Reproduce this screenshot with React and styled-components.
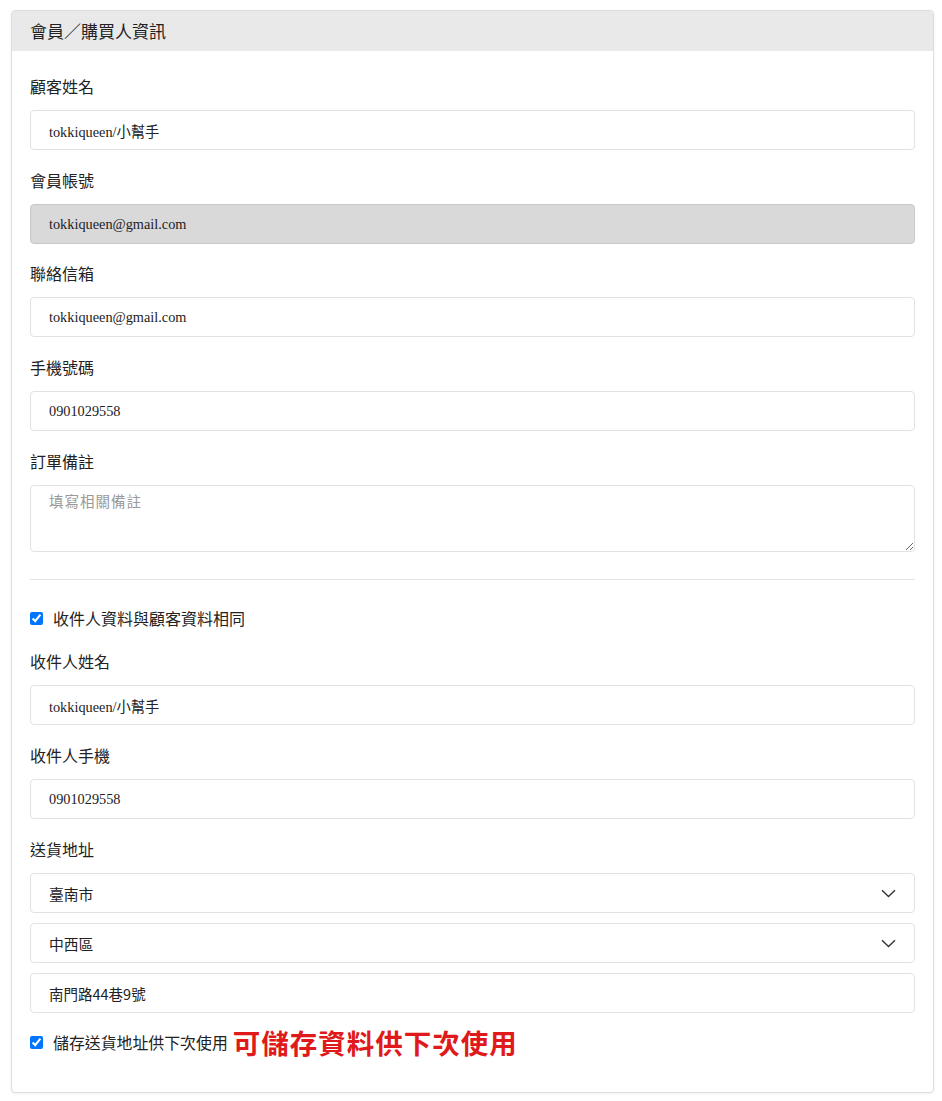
import React from "react";
import styled, { createGlobalStyle } from "styled-components";

const Global = createGlobalStyle`
  html, body { margin: 0; padding: 0; background: #fff; }
  body { font-family: "Noto Sans CJK TC", "Noto Sans", sans-serif; color: #222; }
  * { box-sizing: border-box; }
`;

const Page = styled.div`
  padding: 10px 8px 9px 11px;
`;

const Card = styled.section`
  border: 1px solid #dcdcdc;
  border-radius: 4px;
  background: #fff;
  box-shadow: 0 1px 3px rgba(0,0,0,0.06);
  overflow: hidden;
`;

const Header = styled.div`
  height: 40px;
  background: #e9e9e9;
  display: flex;
  align-items: center;
  padding: 0 18px 1px;
  font-size: 17px;
  color: #222;
`;

const Body = styled.div`
  padding: 24px 18px 38px;
  display: flex;
  flex-direction: column;
`;

const Field = styled.div`
  display: flex;
  flex-direction: column;
  margin-bottom: ${p => p.$mb ?? 19}px;
`;

const Label = styled.label`
  font-size: 16px;
  line-height: 22px;
  margin-bottom: 13px;
  color: #222;
`;

const Input = styled.input`
  height: 40px;
  width: 100%;
  border: 1px solid #e2e2e2;
  border-radius: 4px;
  padding: 0 18px;
  font-family: ${p => (p.$sans ? `"Noto Sans CJK TC", sans-serif` : `"Liberation Serif", "Noto Sans CJK TC", serif`)};
  font-size: ${p => (p.$sans ? "14.5px" : "14.3px")};
  color: #222;
  background: ${p => (p.disabled ? "#d9d9d9" : "#fff")};
  border-color: ${p => (p.disabled ? "#c8c8c8" : "#e2e2e2")};
  outline: none;
  &:disabled { color: #222; }
`;

const TextArea = styled.textarea`
  height: 67px;
  width: 100%;
  border: 1px solid #e2e2e2;
  border-radius: 4px;
  padding: 4px 18px;
  font-family: "Noto Sans CJK TC", sans-serif;
  font-size: 14.5px;
  outline: none;
  &::placeholder { color: #9a9a9a; letter-spacing: 1px; }
`;

const Divider = styled.hr`
  border: none;
  border-top: 1px solid #e4e4e4;
  margin: 9px 0 0;
`;

const CheckRow = styled.label`
  display: flex;
  align-items: center;
  gap: 10px;
  height: 24px;
  margin: ${p => p.$m};
  font-size: ${p => p.$fs || "16px"};
  color: #222;
  input {
    margin: 0;
    width: 13px;
    height: 13px;
    accent-color: #0075ff;
  }
`;

const Note = styled.span`
  color: #e01a1a;
  font-weight: 700;
  font-size: 27.5px;
  letter-spacing: 1px;
  margin-left: -5px;
`;

const SelectBox = styled.div`
  position: relative;
  height: 40px;
  border: 1px solid #e2e2e2;
  border-radius: 4px;
  display: flex;
  align-items: center;
  justify-content: space-between;
  padding: 0 18px;
  margin-bottom: 10px;
  font-size: 14.8px;
  color: #222;
`;

const Chevron = () => (
  <svg width="15" height="9" viewBox="0 0 15 9" fill="none">
    <path d="M1 1.2 L7.5 7.5 L14 1.2" stroke="#333" strokeWidth="1.4" />
  </svg>
);

export default function App() {
  return (
    <>
      <Global />
      <Page>
        <Card>
          <Header>會員／購買人資訊</Header>
          <Body>
            <Field>
              <Label>顧客姓名</Label>
              <Input defaultValue="tokkiqueen/小幫手" />
            </Field>
            <Field $mb={18}>
              <Label>會員帳號</Label>
              <Input defaultValue="tokkiqueen@gmail.com" disabled />
            </Field>
            <Field $mb={19}>
              <Label>聯絡信箱</Label>
              <Input defaultValue="tokkiqueen@gmail.com" />
            </Field>
            <Field $mb={19}>
              <Label>手機號碼</Label>
              <Input defaultValue="0901029558" />
            </Field>
            <Field $mb={18}>
              <Label>訂單備註</Label>
              <TextArea placeholder="填寫相關備註" />
            </Field>
            <Divider />
            <CheckRow $m="26px 0 20px">
              <input type="checkbox" defaultChecked />
              收件人資料與顧客資料相同
            </CheckRow>
            <Field>
              <Label>收件人姓名</Label>
              <Input defaultValue="tokkiqueen/小幫手" />
            </Field>
            <Field>
              <Label>收件人手機</Label>
              <Input defaultValue="0901029558" />
            </Field>
            <Field $mb={0}>
              <Label>送貨地址</Label>
              <SelectBox>
                臺南市
                <Chevron />
              </SelectBox>
              <SelectBox>
                中西區
                <Chevron />
              </SelectBox>
              <Input $sans defaultValue="南門路44巷9號" />
            </Field>
            <CheckRow $m="17px 0 0" $fs="15.9px">
              <input type="checkbox" defaultChecked />
              儲存送貨地址供下次使用
              <Note>可儲存資料供下次使用</Note>
            </CheckRow>
          </Body>
        </Card>
      </Page>
    </>
  );
}
